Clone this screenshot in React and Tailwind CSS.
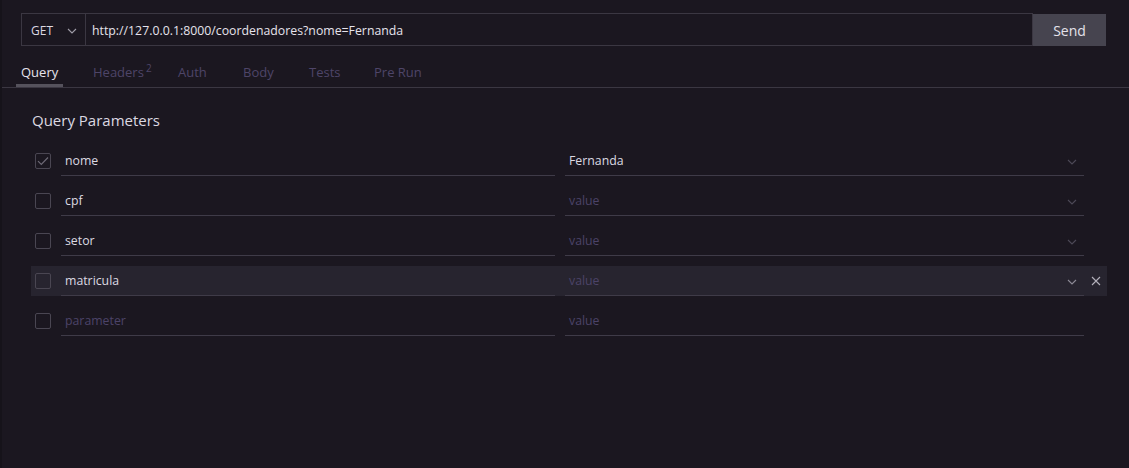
import React from "react";

const params = [
  { key: "nome", value: "Fernanda", checked: true },
  { key: "cpf", value: "" },
  { key: "setor", value: "" },
  { key: "matricula", value: "", hover: true },
];

const tabs = [
  { label: "Query", w: "w-[72px]", active: true },
  { label: "Headers", w: "w-[85px]", sup: "2" },
  { label: "Auth", w: "w-[65px]" },
  { label: "Body", w: "w-[66px]" },
  { label: "Tests", w: "w-[65px]" },
  { label: "Pre Run", w: "w-[80px]" },
];

const Chevron = ({ className = "" }) => (
  <svg width="10" height="6" viewBox="0 0 10 6" fill="none" className={className}>
    <path d="M1 1l4 4 4-4" stroke="currentColor" strokeWidth="1.1" />
  </svg>
);

const Checkbox = ({ checked }) => (
  <div className="w-4 h-4 shrink-0 border border-[#4a4652] rounded-[2px] flex items-center justify-center">
    {checked && (
      <svg width="12" height="10" viewBox="0 0 12 10" fill="none">
        <path d="M1 5.2l3.3 3.3L11 1.5" stroke="#6d6975" strokeWidth="1.2" />
      </svg>
    )}
  </div>
);

const ParamRow = ({ keyName, value, checked, hover }) => (
  <div
    className={`flex items-center h-[30px] pl-[4px] ${hover ? "bg-[#27242f]" : ""}`}
  >
    <Checkbox checked={checked} />
    <div className="ml-[10px] w-[494px] h-full flex items-center px-[4px] pt-[2px] border-b border-[#3f3b48]">
      {keyName ? (
        <span className="text-[#dcd9e2]">{keyName}</span>
      ) : (
        <span className="text-[#4c4368]">parameter</span>
      )}
    </div>
    <div className="ml-[10px] w-[519px] h-full flex items-center px-[4px] pt-[2px] border-b border-[#3f3b48]">
      {value ? (
        <span className="text-[#dcd9e2]">{value}</span>
      ) : (
        <span className="text-[#4c4368]">value</span>
      )}
      {keyName && (
        <Chevron className={`ml-auto mr-[3px] ${hover ? "text-[#8d8a96]" : "text-[#4d4957]"}`} />
      )}
    </div>
    <div className="w-[23px] h-full flex items-center justify-center">
      {hover && (
        <svg width="10" height="10" viewBox="0 0 10 10" fill="none">
          <path d="M1 1l8 8M9 1l-8 8" stroke="#b3b0bb" strokeWidth="1.1" />
        </svg>
      )}
    </div>
  </div>
);

export default function App() {
  return (
    <div className="h-[468px] bg-[#1b1720] border-l-2 border-[#16131a] text-[12.3px] font-['Segoe_UI','Open_Sans',sans-serif]">
      {/* request bar */}
      <div className="flex items-start pt-[13px] pl-[19px] pr-[23px]">
        <div className="w-[65px] h-[33px] flex items-center pl-[9px] pr-[8px] pt-[2px] border border-[#3b3742] text-[#dcd9e2]">
          <span className="text-[12px]">GET</span>
          <Chevron className="ml-auto text-[#a09da8]" />
        </div>
        <div className="flex-1 h-[33px] flex items-center pl-[6px] pt-[3px] border border-l-0 border-[#3b3742] text-[#e6e3ec]">
          http://127.0.0.1:8000/coordenadores?nome=Fernanda
        </div>
        <button className="w-[73px] h-[32px] mt-px bg-[#46444f] text-[#e4e2ea] text-[14px]">
          Send
        </button>
      </div>

      {/* tabs */}
      <div className="flex items-end h-[42px] pl-[14px] border-b border-[#3b3742]">
        {tabs.map((t) => (
          <div key={t.label} className={`${t.w} flex`}>
            <span
              className={`px-[5px] pb-[2px] border-b-[3px] text-[13px] ${
                t.active
                  ? "border-[#55525c] text-[#e6e3ec]"
                  : "border-transparent text-[#4e4568]"
              }`}
            >
              {t.label}
              {t.sup && <sup className="ml-[2px] text-[10px]">{t.sup}</sup>}
            </span>
          </div>
        ))}
      </div>

      {/* query params */}
      <div className="pl-[29px] pr-[22px]">
        <div className="h-[58px] pt-[21px] pl-[1px] text-[15px] leading-[22px] text-[#dcd9e2]">
          Query Parameters
        </div>
        <div className="flex flex-col gap-[10px]">
          {params.map((p) => (
            <ParamRow
              key={p.key}
              keyName={p.key}
              value={p.value}
              checked={p.checked}
              hover={p.hover}
            />
          ))}
          <ParamRow keyName="" value="" />
        </div>
      </div>
    </div>
  );
}
